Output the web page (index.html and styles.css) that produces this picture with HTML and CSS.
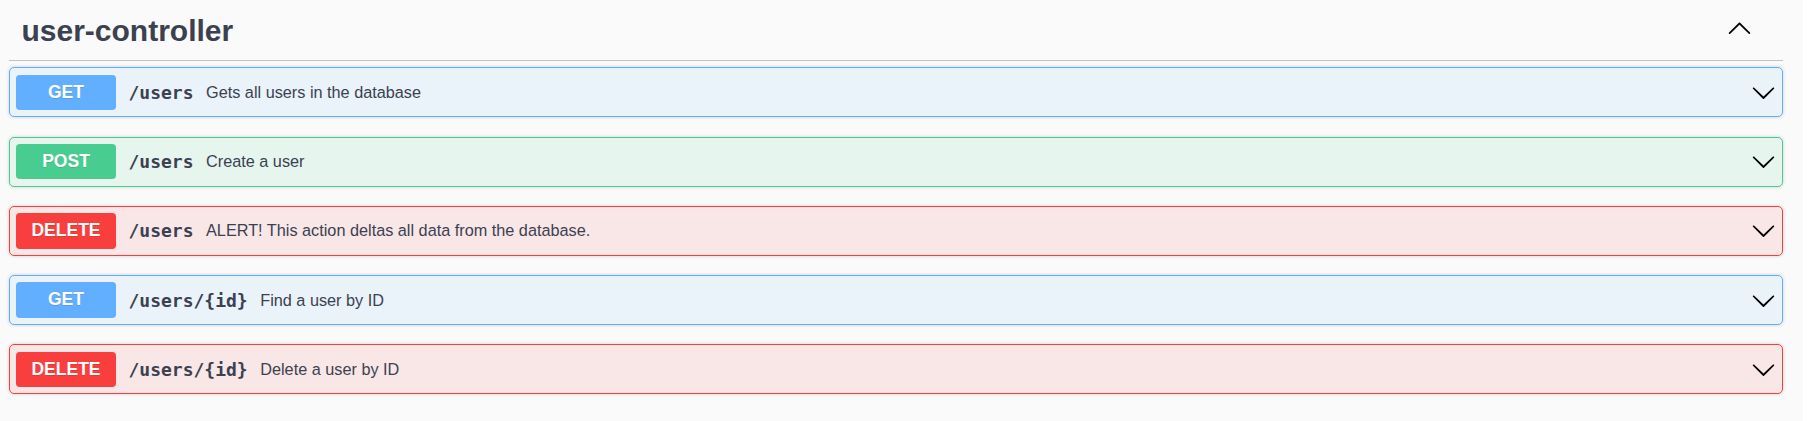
FILE: index.html
```html
<!DOCTYPE html>
<html lang="en">
<head>
<meta charset="utf-8">
<title>user-controller</title>
<link rel="stylesheet" href="styles.css">
</head>
<body>
<div class="page">
  <div class="section">
    <div class="tag">
      <h3 class="tag-title">user-controller</h3>
      <svg class="arrow-up" viewBox="0 0 20 20" width="25" height="25"><path d="M17.418 14.908c.272.268.709.268.979 0s.271-.701 0-.969l-7.908-7.83c-.27-.268-.707-.268-.979 0l-7.908 7.83c-.27.268-.27.701 0 .969.271.268.709.268.979 0L10 7.767l7.418 7.141z"/></svg>
    </div>
    <div class="ops">
      <div class="op get">
        <span class="method">GET</span>
        <span class="path">/users</span>
        <span class="desc">Gets all users in the database</span>
        <svg class="arrow" viewBox="0 0 20 20" width="25" height="25"><path d="M17.418 6.109c.272-.268.709-.268.979 0s.271.701 0 .969l-7.908 7.83c-.27.268-.707.268-.979 0l-7.908-7.83c-.27-.268-.27-.701 0-.969.271-.268.709-.268.979 0L10 13.25l7.418-7.141z"/></svg>
      </div>
      <div class="op post">
        <span class="method">POST</span>
        <span class="path">/users</span>
        <span class="desc">Create a user</span>
        <svg class="arrow" viewBox="0 0 20 20" width="25" height="25"><path d="M17.418 6.109c.272-.268.709-.268.979 0s.271.701 0 .969l-7.908 7.83c-.27.268-.707.268-.979 0l-7.908-7.83c-.27-.268-.27-.701 0-.969.271-.268.709-.268.979 0L10 13.25l7.418-7.141z"/></svg>
      </div>
      <div class="op delete">
        <span class="method">DELETE</span>
        <span class="path">/users</span>
        <span class="desc">ALERT! This action deltas all data from the database.</span>
        <svg class="arrow" viewBox="0 0 20 20" width="25" height="25"><path d="M17.418 6.109c.272-.268.709-.268.979 0s.271.701 0 .969l-7.908 7.83c-.27.268-.707.268-.979 0l-7.908-7.83c-.27-.268-.27-.701 0-.969.271-.268.709-.268.979 0L10 13.25l7.418-7.141z"/></svg>
      </div>
      <div class="op get">
        <span class="method">GET</span>
        <span class="path">/users/{id}</span>
        <span class="desc">Find a user by ID</span>
        <svg class="arrow" viewBox="0 0 20 20" width="25" height="25"><path d="M17.418 6.109c.272-.268.709-.268.979 0s.271.701 0 .969l-7.908 7.83c-.27.268-.707.268-.979 0l-7.908-7.830c-.27-.268-.27-.701 0-.969.271-.268.709-.268.979 0L10 13.25l7.418-7.141z"/></svg>
      </div>
      <div class="op delete">
        <span class="method">DELETE</span>
        <span class="path">/users/{id}</span>
        <span class="desc">Delete a user by ID</span>
        <svg class="arrow" viewBox="0 0 20 20" width="25" height="25"><path d="M17.418 6.109c.272-.268.709-.268.979 0s.271.701 0 .969l-7.908 7.83c-.27.268-.707.268-.979 0l-7.908-7.83c-.27-.268-.27-.701 0-.969.271-.268.709-.268.979 0L10 13.25l7.418-7.141z"/></svg>
      </div>
    </div>
  </div>
</div>
</body>
</html>
```

FILE: styles.css
```css
html, body {
  margin: 0;
  padding: 0;
  background: #ffffff;
}
.page {
  width: 1803px;
  min-height: 421px;
  background: #fafafa;
  box-sizing: border-box;
  padding: 0 20px 0 9px;
  font-family: "Liberation Sans", Arial, sans-serif;
  color: #3b4151;
}
.section {
  display: flex;
  flex-direction: column;
}
.tag {
  display: flex;
  align-items: center;
  height: 61px;
  box-sizing: border-box;
  padding: 0 31px 0 12.5px;
  border-bottom: 1px solid rgba(59, 65, 81, 0.3);
  margin-bottom: 6.3px;
}
.tag-title {
  flex: 1;
  margin: 0;
  padding-top: 1px;
  font-size: 30px;
  font-weight: 700;
  line-height: 33.5px;
  color: #3b4151;
}
.arrow-up {
  fill: #000;
  margin-bottom: 5px;
}
.ops {
  display: flex;
  flex-direction: column;
  gap: 19.3px;
}
.op {
  display: flex;
  align-items: center;
  height: 50px;
  box-sizing: border-box;
  padding: 0 6px 0 6px;
  border: 1px solid;
  border-radius: 5px;
  box-shadow: 0 0 3.75px rgba(0, 0, 0, 0.19);
}
.op.get { border-color: #61affe; background: rgba(97, 175, 254, 0.1); }
.op.post { border-color: #49cc90; background: rgba(73, 204, 144, 0.1); }
.op.delete { border-color: #f93e3e; background: rgba(249, 62, 62, 0.1); }
.method {
  min-width: 100px;
  box-sizing: border-box;
  height: 35.5px;
  line-height: 35.5px;
  text-align: center;
  font-size: 17.5px;
  font-weight: 700;
  color: #fff;
  border-radius: 3.75px;
  text-shadow: 0 1.25px 0 rgba(0, 0, 0, 0.1);
}
.get .method { background: #61affe; }
.post .method { background: #49cc90; }
.delete .method { background: #f93e3e; }
.path {
  padding: 0 12.5px;
  font-family: "DejaVu Sans Mono", monospace;
  font-size: 18px;
  font-weight: 700;
  color: #3b4151;
}
.desc {
  flex: 1;
  font-size: 16.25px;
  color: #3b4151;
}
.arrow {
  fill: #000;
}
```
